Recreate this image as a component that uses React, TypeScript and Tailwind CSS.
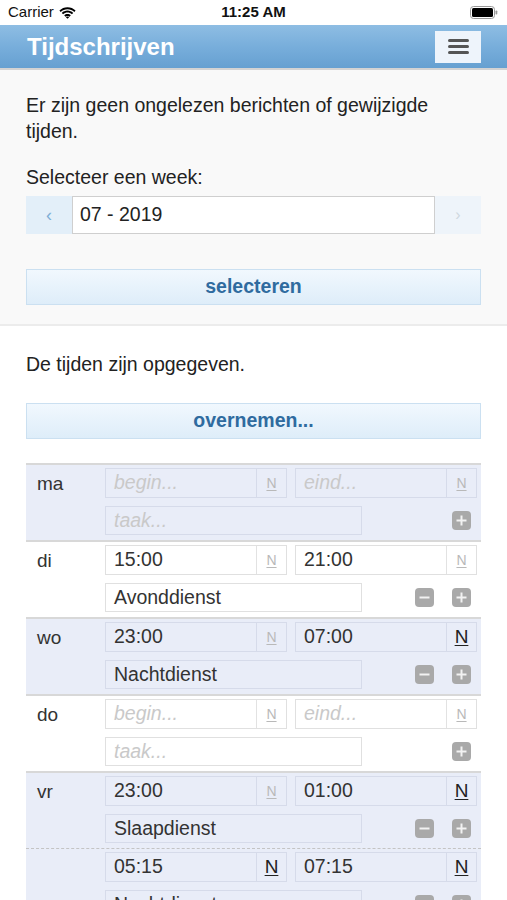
import React from 'react';

interface Shift {
  begin: string;
  end: string;
  beginNext?: boolean;
  endNext?: boolean;
  task: string;
}

interface Day {
  label: string;
  shifts: Shift[];
}

const days: Day[] = [
  { label: 'ma', shifts: [] },
  { label: 'di', shifts: [{ begin: '15:00', end: '21:00', task: 'Avonddienst' }] },
  { label: 'wo', shifts: [{ begin: '23:00', end: '07:00', endNext: true, task: 'Nachtdienst' }] },
  { label: 'do', shifts: [] },
  {
    label: 'vr',
    shifts: [
      { begin: '23:00', end: '01:00', endNext: true, task: 'Slaapdienst' },
      { begin: '05:15', end: '07:15', beginNext: true, endNext: true, task: 'Nachtdienst' },
    ],
  },
  { label: 'za', shifts: [] },
  { label: 'zo', shifts: [] },
];

function Wifi() {
  return (
    <svg width="17" height="12" viewBox="0 0 17 12" className="ml-[5px]">
      <path d="M8.5 2.2c2.6 0 5 1 6.8 2.7l1.3-1.4C14.4 1.4 11.6 0.2 8.5 0.2S2.6 1.4 0.4 3.5l1.3 1.4C3.5 3.2 5.9 2.2 8.5 2.2z" fill="#000" />
      <path d="M8.5 5.6c1.7 0 3.2 0.6 4.4 1.7l1.3-1.4C12.7 4.5 10.7 3.6 8.5 3.6S4.3 4.5 2.8 5.9l1.3 1.4C5.3 6.2 6.8 5.6 8.5 5.6z" fill="#000" />
      <path d="M8.5 8.9c0.8 0 1.5 0.3 2 0.8l1.3-1.4C10.9 7.5 9.8 7 8.5 7S6.1 7.5 5.2 8.3l1.3 1.4c0.5-0.5 1.2-0.8 2-0.8z" fill="#000" />
      <path d="M8.5 11.8l1.6-1.6c-0.4-0.4-1-0.6-1.6-0.6s-1.2 0.2-1.6 0.6z" fill="#000" />
    </svg>
  );
}

function Battery() {
  return (
    <svg width="28" height="13" viewBox="0 0 28 13">
      <rect x="0.5" y="0.5" width="24" height="12" rx="3" fill="none" stroke="#999" />
      <rect x="2" y="2" width="21" height="9" rx="1.5" fill="#000" />
      <rect x="25.5" y="4.5" width="1.8" height="4" rx="0.8" fill="#999" />
    </svg>
  );
}

function NButton({ active, tone }: { active?: boolean; tone: 'blue' | 'white' }) {
  return (
    <div
      className={`w-[30px] h-full flex items-center justify-center border-l ${
        tone === 'blue' ? 'border-[#d6dbea]' : 'border-[#e2e2e2]'
      }`}
    >
      {active ? (
        <span className="text-[19px] text-[#222] underline underline-offset-2">N</span>
      ) : (
        <span className="text-[14px] text-[#b9b9b9] underline underline-offset-2">N</span>
      )}
    </div>
  );
}

function TimeField({ value, placeholder, next, tone, width }: { value?: string; placeholder: string; next?: boolean; tone: 'blue' | 'white'; width: string }) {
  return (
    <div
      className={`${width} h-[30px] flex border ${
        tone === 'blue' ? 'border-[#d6dbea] bg-[#e9edf8]' : 'border-[#e0e0e0] bg-white'
      }`}
    >
      <div className="flex-1 flex items-center pl-[8px]">
        {value ? (
          <span className="text-[19.5px] text-[#333]">{value}</span>
        ) : (
          <span className="text-[19.5px] italic text-[#c9c9c9]">{placeholder}</span>
        )}
      </div>
      <NButton active={next} tone={tone} />
    </div>
  );
}

function RoundIcon({ kind }: { kind: 'minus' | 'plus' }) {
  return (
    <div className="w-[19px] h-[19px] rounded-[4px] bg-[#a9a9a9] flex items-center justify-center">
      <svg width="11" height="11" viewBox="0 0 11 11">
        <rect x="0.5" y="4.5" width="10" height="2" fill="#f2f2f2" />
        {kind === 'plus' && <rect x="4.5" y="0.5" width="2" height="10" fill="#f2f2f2" />}
      </svg>
    </div>
  );
}

function ShiftLines({ shift, tone }: { shift?: Shift; tone: 'blue' | 'white' }) {
  return (
    <div className="flex-1 flex flex-col gap-[8px]">
      <div className="flex gap-[8px]">
        <TimeField width="w-[182px]" value={shift?.begin} placeholder="begin..." next={shift?.beginNext} tone={tone} />
        <TimeField width="w-[182px]" value={shift?.end} placeholder="eind..." next={shift?.endNext} tone={tone} />
      </div>
      <div className="flex items-center h-[29px]">
        <div
          className={`w-[257px] h-full flex items-center pl-[8px] border ${
            tone === 'blue' ? 'border-[#d6dbea] bg-[#e9edf8]' : 'border-[#e0e0e0] bg-white'
          }`}
        >
          {shift ? (
            <span className="text-[19.5px] text-[#333]">{shift.task}</span>
          ) : (
            <span className="text-[19.5px] italic text-[#c9c9c9]">taak...</span>
          )}
        </div>
        <div className="flex-1 flex items-center justify-end gap-[18px] pr-[10px]">
          {shift && <RoundIcon kind="minus" />}
          <RoundIcon kind="plus" />
        </div>
      </div>
    </div>
  );
}

function DayRow({ day, index }: { day: Day; index: number }) {
  const tone = index % 2 === 0 ? 'blue' : 'white';
  const shifts = day.shifts.length ? day.shifts : [undefined];
  return (
    <div className={`border-t-2 border-[#d8d8d8] ${tone === 'blue' ? 'bg-[#e9edf8]' : 'bg-white'}`}>
      {shifts.map((shift, i) => (
        <div
          key={i}
          className={`flex pt-[3px] pb-[5px] ${i > 0 ? 'border-t border-dashed border-[#c4c4c4]' : ''}`}
        >
          <div className="w-[79px] pl-[11px] pt-[2px] text-[19px] text-[#333]">{i === 0 ? day.label : ''}</div>
          <ShiftLines shift={shift} tone={tone} />
        </div>
      ))}
    </div>
  );
}

function BlueButton({ label }: { label: string }) {
  return (
    <button className="w-full h-[36px] border border-[#cbe0f1] bg-gradient-to-b from-[#f1f8fe] to-[#deedf9] text-[19.5px] font-bold text-[#2f6b9f]">
      {label}
    </button>
  );
}

export default function App() {
  return (
    <div className="w-[507px] min-h-[900px] bg-white font-['Liberation_Sans',Arial,sans-serif] text-[#222]">
      <div className="h-[25px] flex items-center justify-between px-[8px] bg-white">
        <div className="flex items-center w-[120px] text-[15px] text-[#111]">
          Carrier
          <Wifi />
        </div>
        <div className="text-[15px] font-bold text-[#111]">11:25 AM</div>
        <div className="w-[120px] flex justify-end pr-[1px]">
          <Battery />
        </div>
      </div>

      <div className="h-[45px] border-b-2 border-[#d3d3d3] bg-gradient-to-b from-[#8ebde3] via-[#78aedb] to-[#66a0d1] flex items-center justify-between pl-[27px] pr-[26px]">
        <h1 className="text-[24px] font-bold text-white">Tijdschrijven</h1>
        <button className="w-[46px] h-[32px] bg-[#eef4fb] flex flex-col items-center justify-center gap-[3px]">
          <span className="block w-[21px] h-[3px] rounded-full bg-[#555]" />
          <span className="block w-[21px] h-[3px] rounded-full bg-[#555]" />
          <span className="block w-[21px] h-[3px] rounded-full bg-[#555]" />
        </button>
      </div>

      <div className="bg-[#f9f9f9] px-[26px] pt-[22px] pb-[19px] border-b-2 border-[#ececec]">
        <p className="text-[19.5px] leading-[26px] text-[#222]">Er zijn geen ongelezen berichten of gewijzigde tijden.</p>
        <p className="mt-[20px] text-[19.5px] leading-[26px] text-[#222]">Selecteer een week:</p>
        <div className="mt-[6px] flex h-[38px]">
          <div className="w-[46px] bg-[#e3eff9] flex items-center justify-center text-[18px] text-[#7eaed6]">‹</div>
          <div className="flex-1 bg-white border border-[#cfcfcf] flex items-center pl-[7px] text-[19.5px] text-[#222]">07 - 2019</div>
          <div className="w-[46px] bg-[#eef4fa] flex items-center justify-center text-[16px] text-[#cfd8e0]">›</div>
        </div>
        <div className="mt-[35px]">
          <BlueButton label="selecteren" />
        </div>
      </div>

      <div className="px-[26px] pt-[25px]">
        <p className="text-[19.5px] leading-[26px] text-[#222]">De tijden zijn opgegeven.</p>
        <div className="mt-[26px]">
          <BlueButton label="overnemen..." />
        </div>
        <div className="mt-[24px]">
          {days.map((day, i) => (
            <DayRow key={day.label} day={day} index={i} />
          ))}
        </div>
      </div>
    </div>
  );
}
